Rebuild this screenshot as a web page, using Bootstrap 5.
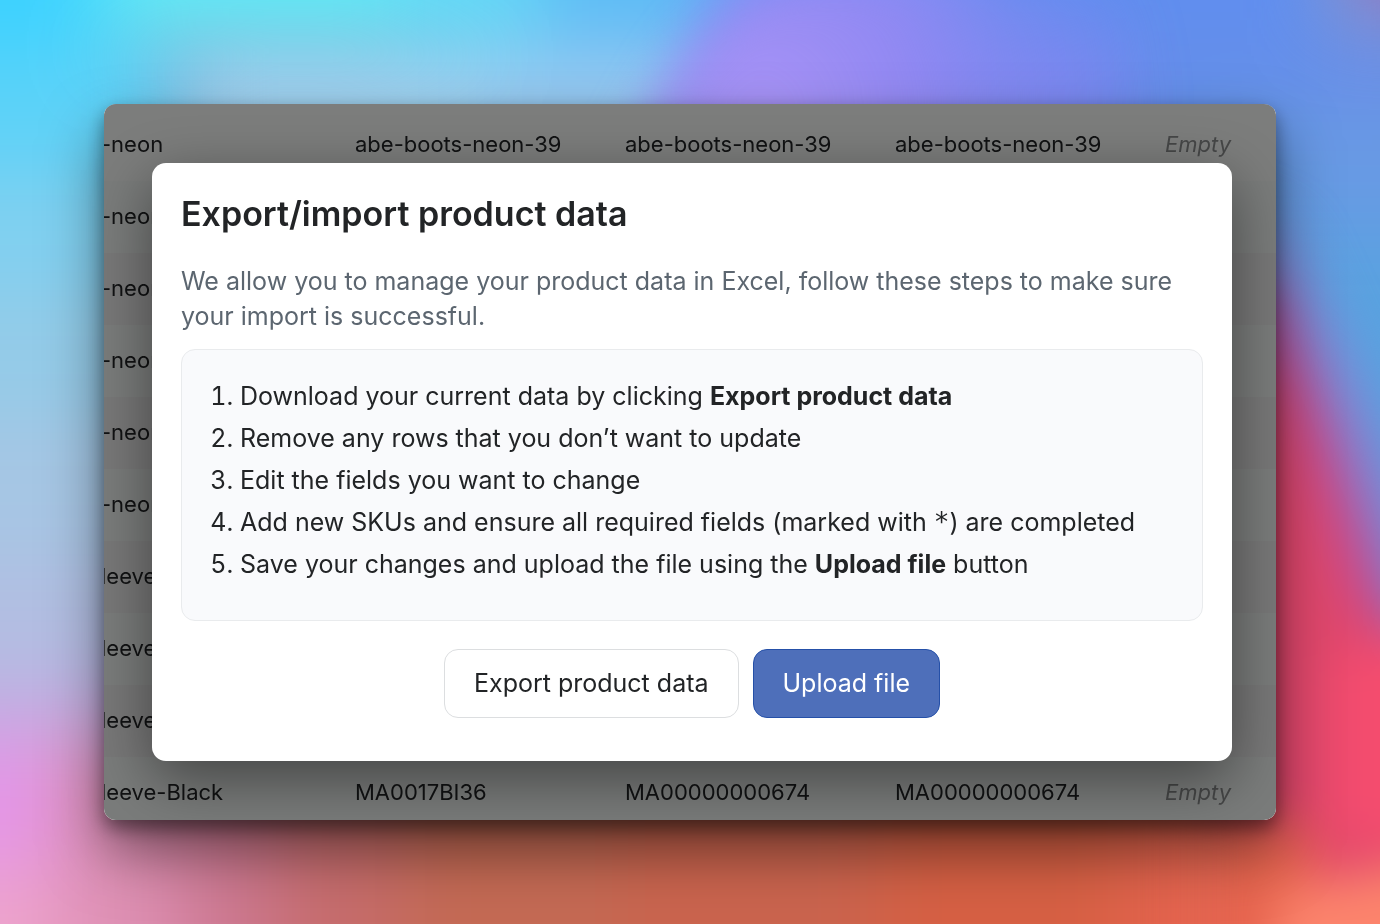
<!DOCTYPE html>
<html lang="en">
<head>
<meta charset="utf-8">
<meta name="viewport" content="width=device-width, initial-scale=1">
<title>Export/import product data</title>
<link href="https://cdn.jsdelivr.net/npm/bootstrap@5.3.0/dist/css/bootstrap.min.css" rel="stylesheet">
<style>
  body { font-family: Inter, "Liberation Sans", sans-serif; color: #222426; padding: 104px; }
  .wallpaper { z-index: -1; }
  .app-window {
    background: #f8faf9; border-radius: 12px; padding-top: 5px;
    box-shadow: 0 30px 60px rgba(0,0,0,.5), 0 8px 18px rgba(0,0,0,.42);
  }
  .sku-grid { height: 0; min-height: 100%; contain: size; }
  .sku-table { font-size: 22px; line-height: 24px; table-layout: fixed; color: #222426; }
  .sku-table td { height: 72px; padding: 0 0 2px; white-space: nowrap; background: #f4f8f6; }
  .sku-table tr:nth-child(odd) td { background: #f0f0f0; }
  .sku-table tr:first-child td { background: #f8faf9; }
  .sku-table .col-name { width: 251px; }
  .sku-table .col-code { width: 270px; }
  .sku-table .is-empty { color: #8c8e8f; font-style: italic; }
  .sku-name { margin-left: -3px; }
  .shade { background: rgba(0,0,0,.5); padding: 0 44px 0 48px; }
  .dialog-box { border-radius: 14px; padding: 29px 29px 43px; box-shadow: 0 18px 60px rgba(0,0,0,.45); }
  .dialog-box h1 { font-size: 34px; line-height: 44px; font-weight: 600; margin-bottom: 28px; }
  .dialog-box p, .dialog-box ol, .dialog-box .btn { font-size: 25px; }
  .dialog-box p { line-height: 35px; color: #5c6670; margin-bottom: 15px; }
  .steps { background: #f9fafc; border: 1px solid #e9ebed; border-radius: 14px; padding: 25px 28px 35px; margin-bottom: 28px; }
  .steps ol { line-height: 42px; padding-left: 30px; }
  .steps code { font: 26px "DejaVu Sans Mono", monospace; line-height: 24px; color: inherit; }
  .dialog-box .btn { line-height: 37px; padding: 15px 29px; border-radius: 14px; font-weight: 400; }
  .btn-plain { --bs-btn-bg: #fff; --bs-btn-color: #222426; --bs-btn-border-color: #dcdee0; --bs-btn-hover-bg: #f4f5f7; --bs-btn-hover-border-color: #ccced0; }
  .btn-upload { --bs-btn-bg: #4e6fba; --bs-btn-color: #fff; --bs-btn-border-color: #2550a8; --bs-btn-hover-bg: #4563aa; --bs-btn-hover-color: #fff; }
  .button-pair { gap: 14px; }
</style>
</head>
<body class="min-vh-100 d-flex">
<svg class="wallpaper position-fixed top-0 start-0 w-100 h-100" viewBox="0 0 1380 924" preserveAspectRatio="none" aria-hidden="true">
  <defs>
    <filter id="soft" filterUnits="userSpaceOnUse" x="-200" y="-200" width="1780" height="1324" color-interpolation-filters="sRGB"><feGaussianBlur stdDeviation="38"/></filter>
    <filter id="edge" filterUnits="userSpaceOnUse" x="-200" y="-200" width="1780" height="1324" color-interpolation-filters="sRGB"><feGaussianBlur stdDeviation="24"/></filter>
    <radialGradient id="violet" gradientUnits="userSpaceOnUse" cx="760" cy="110" r="400"><stop offset="0" stop-color="#aa94f6"/><stop offset=".4" stop-color="#9488f2" stop-opacity=".85"/><stop offset="1" stop-color="#6c8cec" stop-opacity="0"/></radialGradient>
  </defs>
  <rect width="1380" height="924" fill="#8aa0c8"/>
  <g filter="url(#soft)">
    <!-- top band -->
    <path fill="#3cd2ff" d="M-200-200H100V50H-200z"/>
    <path fill="#60e9f6" d="M100-200H400V40H100z"/>
    <path fill="#62d8f6" d="M400-200H540V50H400z"/>
    <path fill="#5cbcf6" d="M540-200H720V50H540z"/>
    <path fill="#7590f6" d="M720-200H960V30H720z"/>
    <path fill="#5f8ef0" d="M960-200H1330V30H960z"/>
    <path fill="#9a62b8" d="M1365-200H1580V0H1365z"/>
    <path fill="#6a8ee6" d="M1330 20H1580V120H1330z"/>
    <path fill="#a4d4f2" d="M190 60H500V300H190z"/>
    <path fill="#98c8f0" d="M480 46H700V300H480z"/>
    <path fill="#7c86f0" d="M700 30H1120V300H700z"/>
    <path fill="#648eea" d="M1120 20H1330V300H1120z"/>
    <!-- left side, top to bottom -->
    <path fill="#5cd2f8" d="M-200 50H170V170H-200z"/>
    <path fill="#80d0f0" d="M-200 170H300V290H-200z"/>
    <path fill="#94cbe8" d="M-200 290H300V420H-200z"/>
    <path fill="#a6c6e4" d="M-200 420H300V560H-200z"/>
    <path fill="#b2bee2" d="M-200 560H300V680H-200z"/>
    <path fill="#c4ace2" d="M-200 680H300V740H-200z"/>
    <path fill="#e496e8" d="M-200 740H60V870H-200z"/>
    <path fill="#eea4cc" d="M-200 870H60V1124H-200z"/>
    <!-- bottom band, left to right -->
    <path fill="#de90b4" d="M60 740H180V1124H60z"/>
    <path fill="#cc7890" d="M180 740H280V1124H180z"/>
    <path fill="#c66c6c" d="M280 740H400V1124H280z"/>
    <path fill="#c46a54" d="M400 740H620V1124H400z"/>
    <path fill="#ca644e" d="M620 740H880V1124H620z"/>
    <path fill="#d66044" d="M880 740H1120V1124H880z"/>
    <path fill="#e4644e" d="M1120 740H1260V1124H1120z"/>
    <!-- right side -->
    <path fill="#689ae4" d="M1200 110H1580V240H1200z"/>
    <path fill="#5aa2e0" d="M1200 230H1580V640H1200z"/>
  </g>
  <g filter="url(#edge)">
    <path fill="url(#violet)" d="M740 0C800-40 1000-40 1180 0V220H580C640 150 660 60 740 0z"/>
    <path fill="#7e86d4" d="M1220 200L1290 230L1355 370L1420 520V640H1220z"/>
    <path fill="#c04c94" d="M1200 270L1276 290L1335 430L1390 590L1440 680V800H1200z"/>
    <path fill="#e0476c" d="M1200 370L1276 370L1315 480L1350 590L1440 720V1000H1200z"/>
    <path fill="#f44c6e" d="M1330 660L1440 620V860L1330 830z"/>
    <path fill="#e6644e" d="M1190 800L1310 830L1330 1000H1190z"/>
    <path fill="#fc846c" d="M1280 890L1480 850V1040H1260z"/>
  </g>
</svg>
<main class="app-window position-relative overflow-hidden flex-fill">
  <div class="sku-grid overflow-hidden">
    <table class="sku-table w-100">
      <colgroup><col class="col-name"><col class="col-code"><col class="col-code"><col class="col-code"><col></colgroup>
      <tbody>
        <tr><td><div class="sku-name">-neon</div></td><td>abe-boots-neon-39</td><td>abe-boots-neon-39</td><td>abe-boots-neon-39</td><td class="is-empty">Empty</td></tr>
        <tr><td><div class="sku-name">-neon</div></td><td></td><td></td><td></td><td></td></tr>
        <tr><td><div class="sku-name">-neon</div></td><td></td><td></td><td></td><td></td></tr>
        <tr><td><div class="sku-name">-neon</div></td><td></td><td></td><td></td><td></td></tr>
        <tr><td><div class="sku-name">-neon</div></td><td></td><td></td><td></td><td></td></tr>
        <tr><td><div class="sku-name">-neon</div></td><td></td><td></td><td></td><td></td></tr>
        <tr><td><div class="sku-name">leeve</div></td><td></td><td></td><td></td><td></td></tr>
        <tr><td><div class="sku-name">leeve</div></td><td></td><td></td><td></td><td></td></tr>
        <tr><td><div class="sku-name">leeve</div></td><td></td><td></td><td></td><td></td></tr>
        <tr><td><div class="sku-name">leeve-Black</div></td><td>MA0017BI36</td><td>MA00000000674</td><td>MA00000000674</td><td class="is-empty">Empty</td></tr>
      </tbody>
    </table>
  </div>
  <div class="shade position-absolute top-0 start-0 w-100 h-100 d-flex align-items-center">
    <section class="dialog-box bg-white w-100" role="dialog" aria-labelledby="dialog-title">
      <h1 id="dialog-title">Export/import product data</h1>
      <p>We allow you to manage your product data in Excel, follow these steps to make sure your import is successful.</p>
      <div class="steps">
        <ol class="mb-0">
          <li>Download your current data by clicking <strong>Export product data</strong></li>
          <li>Remove any rows that you don’t want to update</li>
          <li>Edit the fields you want to change</li>
          <li>Add new SKUs and ensure all required fields (marked with <code>*</code>) are completed</li>
          <li>Save your changes and upload the file using the <strong>Upload file</strong> button</li>
        </ol>
      </div>
      <div class="button-pair d-flex justify-content-center">
        <button type="button" class="btn btn-plain">Export product data</button>
        <button type="button" class="btn btn-upload">Upload file</button>
      </div>
    </section>
  </div>
</main>
<script src="https://cdn.jsdelivr.net/npm/bootstrap@5.3.0/dist/js/bootstrap.bundle.min.js"></script>
</body>
</html>
